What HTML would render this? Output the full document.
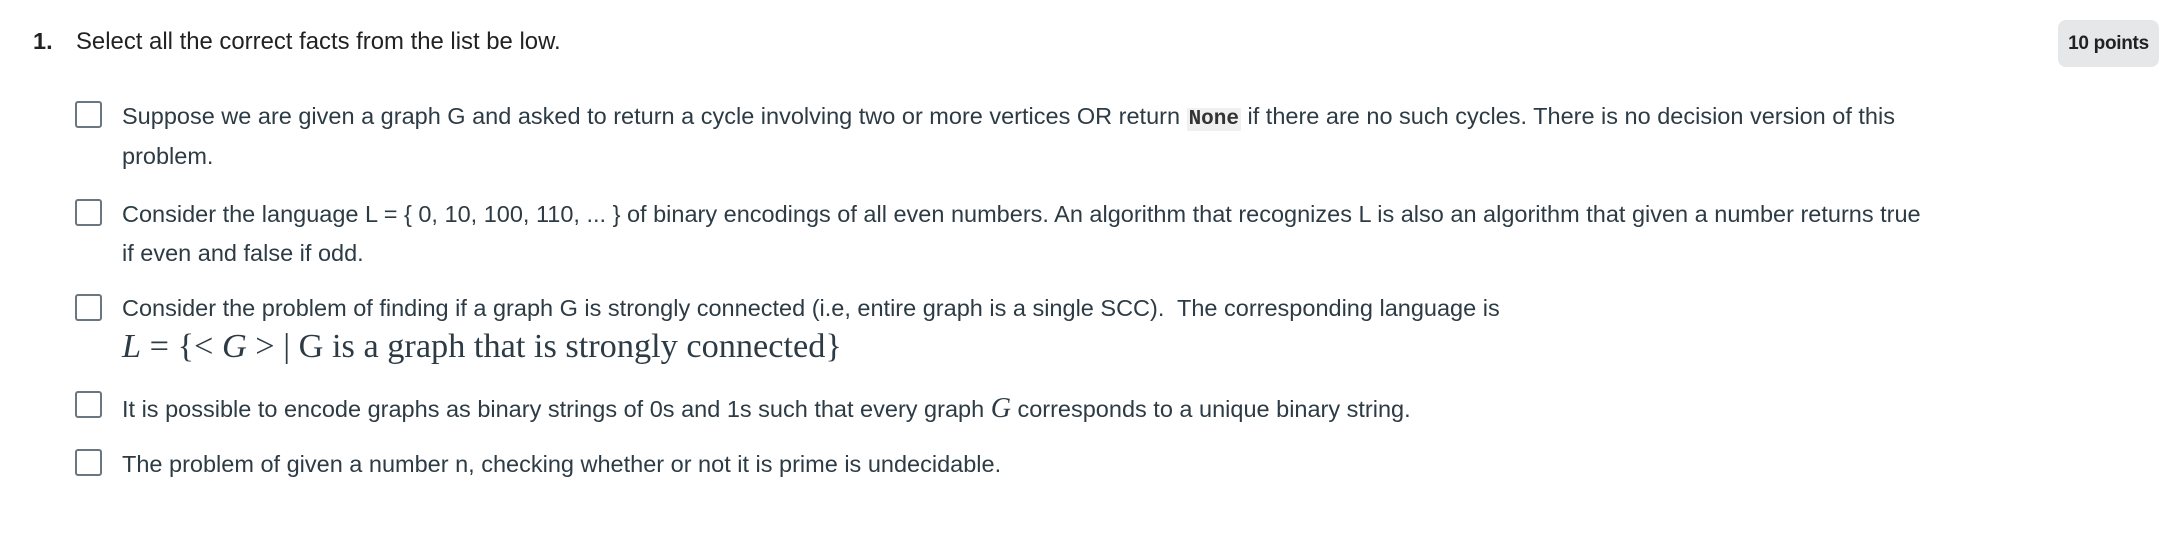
<!DOCTYPE html>
<html><head><meta charset="utf-8"><style>
body{margin:0;width:2169px;height:549px;background:#fff;font-family:"Liberation Sans",sans-serif;color:#2d3b45;position:relative;overflow:hidden}
.a{position:absolute;white-space:nowrap;font-size:23.5px;letter-spacing:0;line-height:1}
.cb{position:absolute;left:75px;border:2px solid #6b7780;border-radius:3px;box-sizing:border-box;width:27px;height:27px}
.badge{position:absolute;left:2058px;top:20px;width:101px;height:47px;background:#e6e7e8;border-radius:8px;font-weight:bold;font-size:19px;line-height:47px;text-align:center;color:#222;letter-spacing:-0.3px}
code{font-family:"Liberation Mono",monospace;font-weight:bold;background:#f0f0f0;font-size:21px;padding:0 2px;color:#333}
.m{font-family:"Liberation Serif",serif;font-size:34.3px;letter-spacing:0}
</style></head><body>
<div class="a" style="left:33px;top:30px;font-weight:bold;color:#222">1.</div>
<div class="a" style="left:76px;top:30px;color:#222;font-size:23.9px">Select all the correct facts from the list be low.</div>
<div class="badge">10 points</div>

<div class="cb" style="top:101px"></div>
<div class="a" style="left:122px;top:105px">Suppose we are given a graph G and asked to return a cycle involving two or more vertices OR return <code>None</code> if there are no such cycles. There is no decision version of this</div>
<div class="a" style="left:122px;top:145px">problem.</div>

<div class="cb" style="top:199px"></div>
<div class="a" style="left:122px;top:203px">Consider the language L = { 0, 10, 100, 110, ... } of binary encodings of all even numbers. An algorithm that recognizes L is also an algorithm that given a number returns true</div>
<div class="a" style="left:122px;top:242px">if even and false if odd.</div>

<div class="cb" style="top:294px"></div>
<div class="a" style="left:122px;top:297px">Consider the problem of finding if a graph G is strongly connected (i.e, entire graph is a single SCC).&nbsp; The corresponding language is</div>
<div class="a m" style="left:122px;top:329px"><i>L</i> = {&lt; <i>G</i> &gt; | G is a graph that is strongly connected}</div>

<div class="cb" style="top:391px"></div>
<div class="a" style="left:122px;top:395px">It is possible to encode graphs as binary strings of 0s and 1s such that every graph <i class="m" style="font-size:28px">G</i> corresponds to a unique binary string.</div>

<div class="cb" style="top:449px"></div>
<div class="a" style="left:122px;top:453px">The problem of given a number n, checking whether or not it is prime is undecidable.</div>
</body></html>
